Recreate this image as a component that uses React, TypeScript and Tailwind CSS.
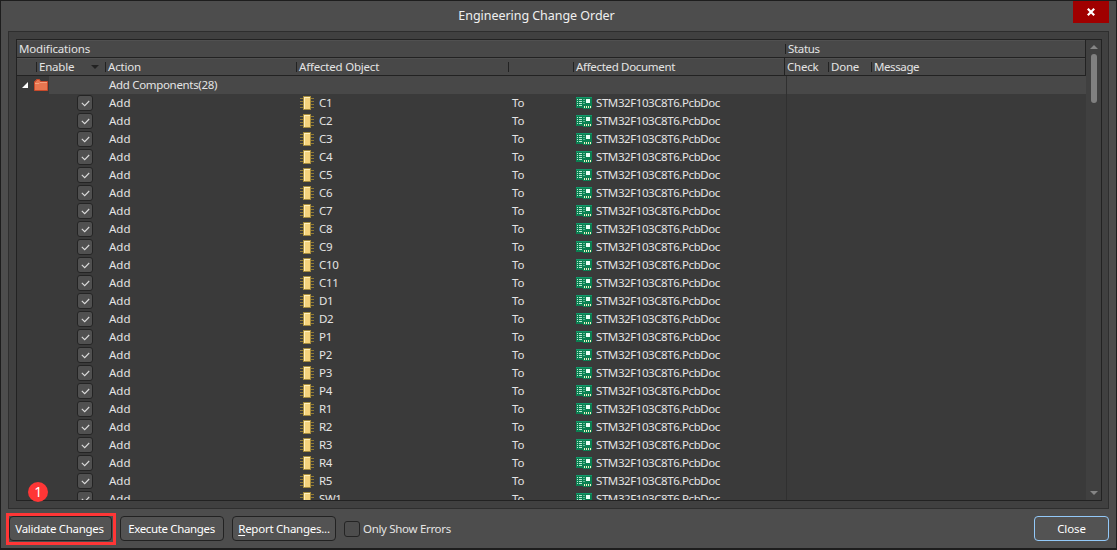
import type { ReactNode } from "react";

const OBJECTS = [
  "C1", "C2", "C3", "C4", "C5", "C6", "C7", "C8", "C9", "C10", "C11",
  "D1", "D2", "P1", "P2", "P3", "P4", "R1", "R2", "R3", "R4", "R5", "SW1",
];

const COLUMNS = "grid grid-cols-[19px_69px_191px_212px_65px_212px_43px_43px_1fr]";

function ChipIcon() {
  return (
    <svg width="14" height="14" viewBox="0 0 14 14" shapeRendering="crispEdges" className="shrink-0">
      <path d="M0 2.5h14M0 5.5h14M0 8.5h14M0 11.5h14" stroke="#8f7935" />
      <rect x="3" y="0" width="8" height="14" fill="#a58b3c" />
      <rect x="4" y="1" width="6" height="12" fill="#fff0bd" />
      <rect x="5" y="2" width="5" height="11" fill="#f5d37c" />
    </svg>
  );
}

function PcbIcon() {
  return (
    <svg width="16" height="12" viewBox="0 0 16 12" shapeRendering="crispEdges" className="shrink-0">
      <path d="M0 0h16v11h-1v1H7v-1H0z" fill="#0b8052" />
      <path d="M0 .5h16" stroke="#13996a" />
      <path d="M1 2.5h1M1 4.5h1M1 6.5h1M1 8.5h1M3 2.5h3M3 4.5h3M3 6.5h3M3 8.5h3" stroke="#b9e7d1" />
      <path d="M7 2.5h2M7 4.5h2M7 6.5h2" stroke="#5fb893" />
      <rect x="10" y="2" width="4" height="4" fill="#e9fff5" />
      <path d="M8.5 9v2M10.5 9v2M12.5 9v2M14.5 9v2" stroke="#f4efc4" />
    </svg>
  );
}

function FolderIcon() {
  return (
    <svg width="14" height="12" viewBox="0 0 14 12" className="shrink-0">
      <path d="M.5 11.5v-9h1v-1h1v-1h3l1 2h7v9z" fill="#e87650" stroke="#c8492a" />
      <path d="M1 4.5h4l1-1h7" stroke="#f5a07c" fill="none" />
    </svg>
  );
}

function CheckBox() {
  return (
    <div className="flex size-4 items-center justify-center rounded-[3px] border border-[#242424] bg-[#505050]">
      <svg width="9" height="7" viewBox="0 0 9 7" fill="none">
        <path d="M.8 2.8l2.9 2.9L8.2 1" stroke="#dcdcdc" strokeWidth="1.1" />
      </svg>
    </div>
  );
}

function HeadCell({ children, bar = true }: { children?: ReactNode; bar?: boolean }) {
  return (
    <div className="relative flex h-[17px] items-center pl-[3px]">
      {bar && <span className="absolute top-1 left-0 h-[10px] w-px bg-[#222]" />}
      {children}
    </div>
  );
}

function Button({ children, className }: { children: ReactNode; className: string }) {
  return (
    <button
      className={`flex h-[25px] items-center justify-center rounded-[4px] border bg-[#535353] text-[11.5px] text-white ${className}`}
    >
      {children}
    </button>
  );
}

function Row({ name }: { name: string }) {
  return (
    <div className={`${COLUMNS} h-[18px] items-center`}>
      <div />
      <div className="pl-[41px]">
        <CheckBox />
      </div>
      <div className="pl-1 tracking-normal">Add</div>
      <div className="flex items-center gap-[5px] pl-1">
        <ChipIcon />
        {name}
      </div>
      <div className="pl-1 tracking-normal">To</div>
      <div className="flex items-center gap-1 pl-[3px] tracking-[-0.42px]">
        <PcbIcon />
        STM32F103C8T6.PcbDoc
      </div>
    </div>
  );
}

export default function App() {
  return (
    <div className="relative flex h-[550px] w-[1117px] flex-col overflow-hidden border border-b-2 border-[#1d1d1d] bg-[#4d4d4d] font-['Noto_Sans','Liberation_Sans',sans-serif] text-[11.5px] leading-[18px] tracking-[-0.32px] text-[#e4e4e4]">
      <header className="relative h-[30px] shrink-0">
        <h1 className="pt-[6px] pr-[44px] text-center text-[12.5px] tracking-[-0.04px] text-[#f0f0f0]">
          Engineering Change Order
        </h1>
        <button className="absolute top-0 right-[7px] flex h-[22px] w-9 items-center justify-center bg-[#a00000]">
          <svg width="8" height="8" viewBox="0 0 8 8">
            <path d="M.8.8l6.4 6.4M7.2.8L.8 7.2" stroke="#fff" strokeWidth="2.2" />
          </svg>
        </button>
      </header>

      <main className="mx-[7px] h-[478px] shrink-0 border border-[#2e2e2e] bg-[#404040] px-[7px] pt-[7px]">
        <div className="flex h-[462px] w-[1086px] overflow-hidden border border-[#222] bg-[#3a3a3a]">
          <div className="w-[1069px] shrink-0">
            <div className="flex h-[18px] border-r border-b border-[#222] bg-[#484848] shadow-[inset_0_1px_#505050]">
              <div className="w-[768px] pl-[2px] tracking-[-0.15px]">Modifications</div>
              <HeadCell>Status</HeadCell>
            </div>
            <div
              className={`${COLUMNS} h-[18px] border-r border-b border-[#222] bg-[#484848] tracking-[-0.2px] shadow-[inset_0_1px_#505050]`}
            >
              <div />
              <HeadCell>
                Enable
                <svg width="8" height="4" viewBox="0 0 8 4" className="absolute right-[6px]">
                  <path d="M0 0h8L4 4z" fill="#222" />
                </svg>
              </HeadCell>
              <HeadCell>Action</HeadCell>
              <HeadCell>Affected Object</HeadCell>
              <HeadCell />
              <HeadCell>
                <span className="tracking-[-0.32px]">Affected Document</span>
              </HeadCell>
              <div className="-ml-px flex items-center border-l border-[#222] pl-[2px]">Check</div>
              <HeadCell>Done</HeadCell>
              <HeadCell>
                <span className="tracking-[-0.4px]">Message</span>
              </HeadCell>
            </div>

            <div className="relative">
              <div className="flex h-[18px] items-center">
                <svg width="6" height="6" viewBox="0 0 6 6" className="ml-[5px]">
                  <path d="M6 0v6H0z" fill="#fff" />
                </svg>
                <div className="ml-[6px]">
                  <FolderIcon />
                </div>
                <div className="ml-px h-full flex-1 bg-[#484848] pl-[60px]">Add Components(28)</div>
              </div>
              {OBJECTS.map((name) => (
                <Row key={name} name={name} />
              ))}
              <span className="absolute top-0 left-[769px] h-full w-px bg-[#303030]" />
            </div>
          </div>

          <div className="flex flex-1 flex-col items-center bg-[#404040] pt-[5px] pb-[5px]">
            <svg width="8" height="4" viewBox="0 0 8 4">
              <path d="M0 4h8L4 0z" fill="#858585" />
            </svg>
            <div className="mt-[5px] h-[49px] w-[6px] rounded-full bg-[#808080]" />
            <svg width="8" height="4" viewBox="0 0 8 4" className="mt-auto">
              <path d="M0 0h8L4 4z" fill="#858585" />
            </svg>
          </div>
        </div>
      </main>

      <footer className="flex items-start pt-[7px] pr-[7px] pl-2">
        <Button className="w-[103px] border-[#222] pr-[2px] tracking-[-0.3px]">Validate Changes</Button>
        <Button className="ml-2 w-[104px] border-[#222] pr-px tracking-[-0.35px]">Execute Changes</Button>
        <Button className="ml-2 w-[104px] border-[#222] tracking-[-0.25px]">
          <span className="underline underline-offset-2">R</span>eport Changes...
        </Button>
        <label className="ml-2 flex h-[25px] items-center gap-[3px]">
          <span className="size-4 rounded-[3px] border border-[#242424] bg-[#4d4d4d]" />
          Only Show Errors
        </label>
        <Button className="ml-auto w-[75px] border-[#93c9f9] tracking-[-0.1px]">Close</Button>
      </footer>

      {/* step marker */}
      <div className="absolute top-[512px] left-[5px] h-8 w-[110px] border-3 border-[#ff3636]" />
      <div className="absolute top-[481px] left-[27px] flex size-5 items-center justify-center rounded-full bg-[#ff3636] text-[14px] text-white">
        1
      </div>
    </div>
  );
}
